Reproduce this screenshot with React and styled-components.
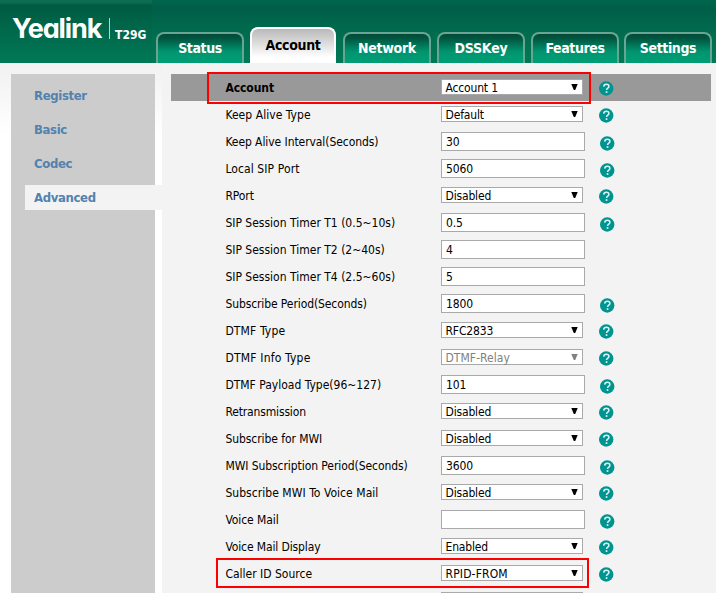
import React from 'react';
import styled, { createGlobalStyle, css } from 'styled-components';

const Global = createGlobalStyle`
  * { box-sizing: border-box; }
  body {
    margin: 0;
    overflow: hidden;
    background: #fff;
    color: #000;
    font: 12px/16px "DejaVu Sans Condensed", "Noto Sans", sans-serif;
  }
`;

const Page = styled.div`
  width: 716px;
  height: 593px;
  overflow: hidden;
  background: linear-gradient(#f2f2f2 0, #f2f2f2 68px, #fff 135px);
`;

const Header = styled.header`
  display: flex;
  height: 63px;
  background: linear-gradient(#00664d 0, #005f47 8px, #007a57 63px);
`;

const Brand = styled.div`
  display: flex;
  width: 152px;
  height: 63px;
  padding-left: 12px;
  color: #fff;
  background: linear-gradient(#0d6e54 0, #0b6a50 3px, #005b43 5px, #007956 63px);
`;

const LogoText = styled.span`
  width: 92px;
  margin-top: 13px;
  font: 700 27px/32px Inter, sans-serif;
  font-feature-settings: "cv11" 1;
  letter-spacing: -1.1px;
`;

const LogoDivider = styled.span`
  width: 1px;
  height: 21px;
  margin: 18px 0 0 5px;
  background: #b5d5ca;
`;

const Model = styled.span`
  margin: 27px 0 0 5px;
  font-weight: 700;
  letter-spacing: 0.05px;
`;

const Tabs = styled.nav`
  display: flex;
  align-items: flex-end;
  gap: 6px;
  margin-left: 4px;
`;

const Tab = styled.a`
  flex: none;
  width: 88px;
  height: 31px;
  padding-top: 6px;
  border: 2px solid #69a592;
  border-bottom: 0;
  border-radius: 8px 8px 0 0;
  background: linear-gradient(#004a38 0, #00543f 4px, #00966f 18px, #009e76 29px);
  color: #fff;
  font-weight: 700;
  font-size: 14px;
  line-height: 16px;
  letter-spacing: ${(p) => p.$tracking}px;
  text-align: center;

  &:last-child {
    margin-left: -1px;
  }

  ${(p) =>
    p.$active &&
    css`
      width: 86px;
      height: 36px;
      margin: 0 1px 0 0;
      padding-top: 8px;
      border-color: #fff;
      background: linear-gradient(#b9b9b9, #fff 28px);
      color: #000;
    `}
`;

const Body = styled.main`
  display: flex;
  height: 530px;
  padding-left: 11px;
`;

const Sidebar = styled.nav`
  width: 144px;
  margin-top: 11px;
  padding: 9px 0 0 14px;
  background: #ccc;
`;

const SideLink = styled.a`
  display: block;
  width: 137px;
  height: 25px;
  margin-bottom: 9px;
  padding-left: 9px;
  background: ${(p) => (p.$active ? '#f3f3f3' : 'transparent')};
  color: #5282ae;
  font-weight: 700;
  font-size: 13px;
  line-height: 25px;
  letter-spacing: -0.35px;
`;

const Content = styled.section`
  flex: 1;
  margin-left: 7px;
  padding: 11px 5px 0 9px;
  background: #f3f3f3;
`;

const Row = styled.div`
  display: flex;
  align-items: center;
  width: 540px;
  height: 27px;
  padding-left: 54px;
  background: ${(p) => (p.$heading ? '#999' : 'transparent')};
  font-weight: ${(p) => (p.$heading ? 700 : 400)};
`;

const Label = styled.label`
  width: 216px;
  padding-left: 0.4px;
  letter-spacing: ${(p) => p.$tracking ?? -0.07}px;
  white-space: nowrap;
`;

const SelectBox = styled.div`
  display: flex;
  align-items: center;
  justify-content: space-between;
  width: 142px;
  height: 16px;
  margin-top: -1px;
  padding: 0 4px 0 3.5px;
  border: 1px solid #a9a9a9;
  background: #fff;
  color: ${(p) => (p.$disabled ? '#808080' : '#000')};
  font-weight: 400;
  line-height: 14px;
  letter-spacing: ${(p) => p.$tracking ?? -0.16}px;
`;

const Value = styled.span`
  padding-top: 2px;
`;

const InputBox = styled.div`
  width: 144px;
  height: 19px;
  padding: 1px 0 0 4px;
  border: 1px solid #a9a9a9;
  background: #fff;
  line-height: 17px;
  letter-spacing: -0.1px;
`;

const Arrow = styled.svg`
  flex: none;
  width: 7px;
  height: 8px;
`;

const HelpIcon = styled.svg`
  flex: none;
  width: 15px;
  height: 15px;
  margin: ${(p) => (p.$input ? '3px 0 0 15px' : '2px 0 0 16px')};
`;

const Highlight = styled.div`
  position: absolute;
  left: ${(p) => p.$x}px;
  top: ${(p) => p.$y}px;
  width: ${(p) => p.$w}px;
  height: ${(p) => p.$h}px;
  border: 2px solid #fe0000;
`;

const Help = ({ input }) => (
  <HelpIcon $input={input} viewBox="0 0 15 15">
    <circle cx="7.2" cy="7.5" r="7.2" fill="#009490" />
    <path
      d="M4.7 5.6C4.8 4.1 5.9 3.3 7.3 3.3c1.5 0 2.6.8 2.6 2.1 0 1.7-2.4 1.9-2.4 3.7"
      fill="none"
      stroke="#d9f5f3"
      strokeWidth="1.5"
    />
    <rect x="6.7" y="10.2" width="1.7" height="1.7" fill="#d9f5f3" />
  </HelpIcon>
);

const Select = ({ value, disabled, tracking }) => (
  <SelectBox $disabled={disabled} $tracking={tracking}>
    <Value>{value}</Value>
    <Arrow viewBox="0 0 7 8">
      <path d="M0.3 1h6.4L4.2 7H2.8z" fill="currentColor" />
    </Arrow>
  </SelectBox>
);

const tabs = [
  ['Status', -0.4],
  ['Account', -0.35],
  ['Network', -0.3],
  ['DSSKey', -0.2],
  ['Features', -0.4],
  ['Settings', -0.4],
];

const links = ['Register', 'Basic', 'Codec', 'Advanced'];

const fields = [
  { label: 'Account', value: 'Account 1', heading: true },
  { label: 'Keep Alive Type', value: 'Default', tracking: 0.05 },
  { label: 'Keep Alive Interval(Seconds)', value: '30', input: true },
  { label: 'Local SIP Port', value: '5060', input: true, tracking: 0.1 },
  { label: 'RPort', value: 'Disabled' },
  { label: 'SIP Session Timer T1 (0.5~10s)', value: '0.5', input: true, tracking: 0 },
  { label: 'SIP Session Timer T2 (2~40s)', value: '4', input: true, noHelp: true, tracking: 0 },
  { label: 'SIP Session Timer T4 (2.5~60s)', value: '5', input: true, noHelp: true, tracking: 0 },
  { label: 'Subscribe Period(Seconds)', value: '1800', input: true, tracking: -0.1 },
  { label: 'DTMF Type', value: 'RFC2833', tracking: 0.15 },
  { label: 'DTMF Info Type', value: 'DTMF-Relay', disabled: true, tracking: 0.2, valueTracking: 0.05 },
  { label: 'DTMF Payload Type(96~127)', value: '101', input: true, tracking: 0 },
  { label: 'Retransmission', value: 'Disabled', tracking: -0.15 },
  { label: 'Subscribe for MWI', value: 'Disabled' },
  { label: 'MWI Subscription Period(Seconds)', value: '3600', input: true },
  { label: 'Subscribe MWI To Voice Mail', value: 'Disabled', tracking: 0.05 },
  { label: 'Voice Mail', value: '', input: true },
  { label: 'Voice Mail Display', value: 'Enabled', tracking: -0.12 },
  { label: 'Caller ID Source', value: 'RPID-FROM', tracking: 0, valueTracking: 0.15 },
  { label: '', value: '', noHelp: true },
];

export default function App() {
  return (
    <Page>
      <Global />
      <Header>
        <Brand>
          <LogoText>Yealink</LogoText>
          <LogoDivider />
          <Model>T29G</Model>
        </Brand>
        <Tabs>
          {tabs.map(([name, tracking]) => (
            <Tab key={name} $tracking={tracking} $active={name === 'Account'}>
              {name}
            </Tab>
          ))}
        </Tabs>
      </Header>
      <Body>
        <Sidebar>
          {links.map((name) => (
            <SideLink key={name} $active={name === 'Advanced'}>
              {name}
            </SideLink>
          ))}
        </Sidebar>
        <Content>
          {fields.map((f) => (
            <Row key={f.label} $heading={f.heading}>
              <Label $tracking={f.tracking}>{f.label}</Label>
              {f.input ? (
                <InputBox>{f.value}</InputBox>
              ) : (
                <Select value={f.value} disabled={f.disabled} tracking={f.valueTracking} />
              )}
              {!f.noHelp && <Help input={f.input} />}
            </Row>
          ))}
        </Content>
      </Body>
      <Highlight $x={207} $y={72} $w={384} $h={32} />
      <Highlight $x={216} $y={558} $w={373} $h={30} />
    </Page>
  );
}
